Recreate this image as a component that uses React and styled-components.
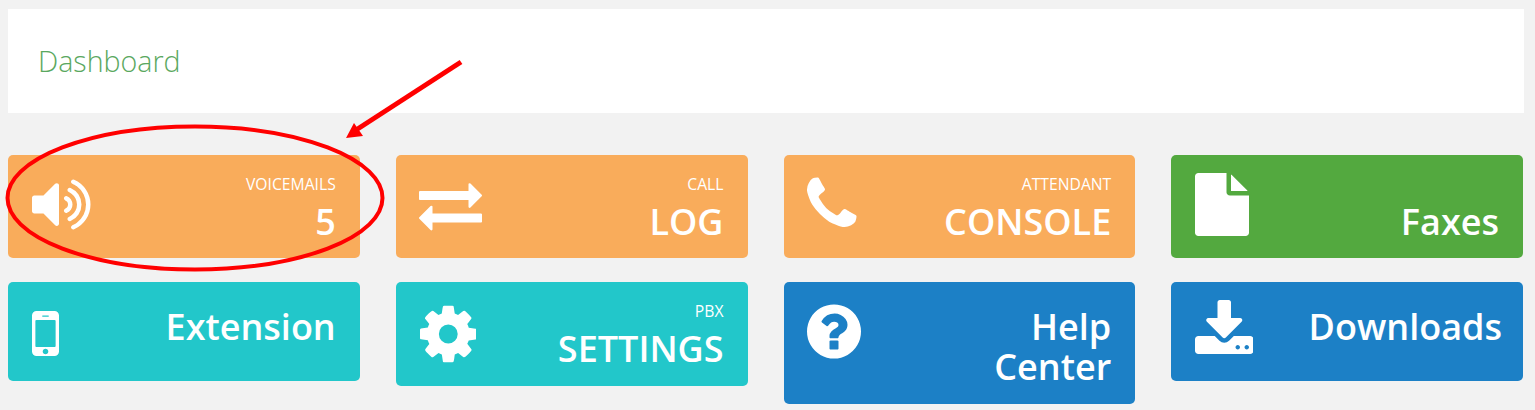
import styled, { createGlobalStyle } from 'styled-components';

const GlobalStyle = createGlobalStyle`
  body {
    margin: 0;
    background: #f2f2f2;
    font-family: 'Open Sans', 'Liberation Sans', sans-serif;
  }
`;

const colors = {
  orange: '#f9ac5b',
  green: '#53a93f',
  teal: '#22c7ca',
  blue: '#1c80c6',
};

// font awesome 4 glyphs, box is the horizontal extent of the glyph
const icons = {
  volume: {
    x: 64,
    w: 1664,
    d: 'M832 352v1088q0 26-19 45t-45 19-45-19l-333-333h-262q-26 0-45-19t-19-45v-384q0-26 19-45t45-19h262l333-333q19-19 45-19t45 19 19 45zm384 544q0 76-42.5 141.5t-112.5 93.5q-10 5-25 5-26 0-45-18.5t-19-45.5q0-21 12-35.5t29-25 34-23 29-36 12-56.5-12-56.5-29-36-34-23-29-25-12-35.5q0-27 19-45.5t45-18.5q15 0 25 5 70 27 112.5 93t42.5 142zm256 0q0 153-85 282.5t-225 188.5q-13 5-25 5-27 0-46-19t-19-45q0-39 39-59 56-29 76-44 74-54 115.5-135.5t41.5-173.5-41.5-173.5-115.5-135.5q-20-15-76-44-39-20-39-59 0-26 19-45t45-19q13 0 26 5 140 59 225 188.5t85 282.5zm256 0q0 230-127 422.5t-338 283.5q-13 5-26 5-26 0-45-19t-19-45q0-36 39-59 7-4 22.5-10.5t22.5-10.5q46-25 82-51 123-91 192-227t69-289-69-289-192-227q-36-26-82-51-7-4-22.5-10.5t-22.5-10.5q-39-23-39-59 0-26 19-45t45-19q13 0 26 5 211 91 338 283.5t127 422.5z',
  },
  exchange: {
    x: 0,
    w: 1792,
    d: 'M1792 1184v192q0 13-9.5 22.5t-22.5 9.5h-1376v192q0 13-9.5 22.5t-22.5 9.5q-12 0-24-10l-319-320q-9-9-9-22 0-14 9-23l320-320q9-9 23-9 13 0 22.5 9.5t9.5 22.5v192h1376q13 0 22.5 9.5t9.5 22.5zm0-544q0 14-9 23l-320 320q-9 9-23 9-13 0-22.5-9.5t-9.5-22.5v-192h-1376q-13 0-22.5-9.5t-9.5-22.5v-192q0-13 9.5-22.5t22.5-9.5h1376v-192q0-14 9-23t23-9q12 0 24 10l319 319q9 9 9 23z',
  },
  phone: {
    x: 192,
    w: 1408,
    d: 'M1600 1240q0 27-10 70.5t-21 68.5q-21 50-122 106-94 51-186 51-27 0-53-3.5t-57.5-12.5-47-14.5-55.5-20.5-49-18q-98-35-175-83-127-79-264-216t-216-264q-48-77-83-175-3-9-18-49t-20.5-55.5-14.5-47-12.5-57.5-3.5-53q0-92 51-186 56-101 106-122 25-11 68.5-21t70.5-10q14 0 21 3 18 6 53 76 11 19 30 54t35 63.5 31 53.5q3 4 17.5 25t21.5 35.5 7 28.5q0 20-28.5 50t-62 55-62 53-28.5 46q0 9 5 22.5t8.5 20.5 14 24 11.5 19q76 137 174 235t235 174q2 1 19 11.5t24 14 20.5 8.5 22.5 5q18 0 46-28.5t53-62 55-62 50-28.5q14 0 28.5 7t35.5 21.5 25 17.5q25 15 53.5 31t63.5 35 54 30q70 35 76 53 3 7 3 21z',
  },
  file: {
    x: 128,
    w: 1536,
    d: 'M1152 512v-472q22 14 36 28l408 408q14 14 28 36h-472zm-128 32q0 40 28 68t68 28h544v1056q0 40-28 68t-68 28h-1344q-40 0-68-28t-28-68v-1600q0-40 28-68t68-28h800v544z',
  },
  mobile: {
    x: 512,
    w: 768,
    d: 'M976 1408q0-33-23.5-56.5t-56.5-23.5-56.5 23.5-23.5 56.5 23.5 56.5 56.5 23.5 56.5-23.5 23.5-56.5zm208-160v-704q0-13-9.5-22.5t-22.5-9.5h-512q-13 0-22.5 9.5t-9.5 22.5v704q0 13 9.5 22.5t22.5 9.5h512q13 0 22.5-9.5t9.5-22.5zm-192-848q0-16-16-16h-160q-16 0-16 16t16 16h160q16 0 16-16zm288-16v1024q0 52-38 90t-90 38h-512q-52 0-90-38t-38-90v-1024q0-52 38-90t90-38h512q52 0 90 38t38 90z',
  },
  cog: {
    x: 128,
    w: 1536,
    size: 66,
    d: 'M1152 896q0-106-75-181t-181-75-181 75-75 181 75 181 181 75 181-75 75-181zm512-109v222q0 12-8 23t-20 13l-185 28q-19 54-39 91 35 50 107 138 10 12 10 25t-9 23q-27 37-99 108t-94 71q-12 0-26-9l-138-108q-44 23-91 38-16 136-29 186-7 28-36 28h-222q-14 0-24.5-8.5t-11.5-21.5l-28-184q-49-16-90-37l-141 107q-10 9-25 9-14 0-25-11-126-114-165-168-7-10-7-23 0-12 8-23 15-21 51-66.5t54-70.5q-27-50-41-99l-183-27q-13-2-21-12.5t-8-23.5v-222q0-12 8-23t19-13l186-28q14-46 39-92-40-57-107-138-10-12-10-24 0-10 9-23 26-36 98.5-107.5t94.5-71.5q13 0 26 10l138 107q44-23 91-38 16-136 29-186 7-28 36-28h222q14 0 24.5 8.5t11.5 21.5l28 184q49 16 90 37l142-107q9-9 24-9 13 0 25 10 129 119 165 170 7 8 7 22 0 12-8 23-15 21-51 66.5t-54 70.5q26 50 41 98l183 28q13 2 21 12.5t8 23.5z',
  },
  question: {
    x: 128,
    w: 1536,
    d: 'M1024 1376v-192q0-14-9-23t-23-9h-192q-14 0-23 9t-9 23v192q0 14 9 23t23 9h192q14 0 23-9t9-23zm256-672q0-88-55.5-163t-138.5-116-170-41q-243 0-371 213-15 24 8 42l132 100q7 6 19 6 16 0 25-12 53-68 86-92 34-24 86-24 48 0 85.5 26t37.5 59q0 38-20 61t-68 45q-63 28-115.5 86.5t-52.5 125.5v36q0 14 9 23t23 9h192q14 0 23-9t9-23q0-19 21.5-49.5t54.5-49.5q32-18 49-28.5t46-35 44.5-48 28-60.5 12.5-81zm384 192q0 209-103 385.5t-279.5 279.5-385.5 103-385.5-103-279.5-279.5-103-385.5 103-385.5 279.5-279.5 385.5-103 385.5 103 279.5 279.5 103 385.5z',
  },
  download: {
    x: 64,
    w: 1664,
    d: 'M1344 1344q0-26-19-45t-45-19-45 19-19 45 19 45 45 19 45-19 19-45zm256 0q0-26-19-45t-45-19-45 19-19 45 19 45 45 19 45-19 19-45zm128-224v320q0 40-28 68t-68 28h-1472q-40 0-68-28t-28-68v-320q0-40 28-68t68-28h465l135 136q58 56 136 56t136-56l136-136h464q40 0 68 28t28 68zm-325-569q17 41-14 70l-448 448q-18 19-45 19t-45-19l-448-448q-31-29-14-70 17-39 59-39h256v-448q0-26 19-45t45-19h256q26 0 45 19t19 45v448h256q42 0 59 39z',
  },
};

const cards = [
  { color: 'orange', icon: 'volume', label: 'VOICEMAILS', value: ['5'], height: 103, shift: 0.5 },
  { color: 'orange', icon: 'exchange', label: 'CALL', value: ['LOG'], height: 103 },
  { color: 'orange', icon: 'phone', label: 'ATTENDANT', value: ['CONSOLE'], height: 103 },
  { color: 'green', icon: 'file', label: '\u00a0', value: ['Faxes'], height: 103 },
  { color: 'teal', icon: 'mobile', value: ['Extension'], height: 99, lower: 2 },
  { color: 'teal', icon: 'cog', label: 'PBX', value: ['SETTINGS'], height: 104, lower: 1, shift: 0.5 },
  { color: 'blue', icon: 'question', value: ['Help', 'Center'], height: 122 },
  { color: 'blue', icon: 'download', value: ['Downloads'], height: 99, tight: true },
];

const ICON_SIZE = 63;

const Glyph = ({ name, lower = 0, shift = 0 }) => {
  const { x, w, d, size = ICON_SIZE } = icons[name];
  return (
    <GlyphSvg
      viewBox={`${x} 0 ${w} 1792`}
      width={(w / 1792) * size}
      height={size}
      $lower={lower}
      $shift={shift}
    >
      <path d={d} fill="#fff" />
    </GlyphSvg>
  );
};

const App = () => (
  <Page>
    <GlobalStyle />
    <Header>
      <Title>Dashboard</Title>
    </Header>
    <Grid>
      {cards.map(card => (
        <Card
          key={card.icon}
          $color={colors[card.color]}
          $height={card.height}
          $tight={card.tight}
        >
          <Glyph name={card.icon} lower={card.lower} shift={card.shift} />
          <Body>
            {card.label && <Label>{card.label}</Label>}
            <Value>
              {card.value.map(line => (
                <div key={line}>{line}</div>
              ))}
            </Value>
          </Body>
        </Card>
      ))}
    </Grid>
    <Markup viewBox="0 0 1535 410" width="1535" height="410">
      <ellipse cx="195" cy="198" rx="187.5" ry="71.5" fill="none" stroke="#f00" strokeWidth="4" />
      <line x1="461" y1="62" x2="356" y2="130" stroke="#f00" strokeWidth="5" />
      <polygon points="346,138 354,123 363,136" fill="#f00" />
    </Markup>
  </Page>
);

const Page = styled.div`
  position: relative;
  height: 410px;
  padding: 9px 11px 0 8px;
  box-sizing: border-box;
  overflow: hidden;
`;

const Header = styled.header`
  display: flex;
  align-items: center;
  box-sizing: border-box;
  height: 104px;
  padding: 0 0 2px 30px;
  background: #fff;
`;

const Title = styled.h1`
  margin: 0;
  color: #5aa860;
  font-size: 28.6px;
  font-weight: 300;
`;

const Grid = styled.div`
  display: grid;
  grid-template-columns: repeat(4, 1fr);
  column-gap: 36px;
  row-gap: 24px;
  align-items: start;
  margin: 42px 1px 0 0;
`;

const Card = styled.div`
  display: flex;
  justify-content: space-between;
  align-items: flex-start;
  box-sizing: border-box;
  height: ${props => props.$height}px;
  padding: 18px ${props => (props.$tight ? 21 : 24)}px 0 23.5px;
  border-radius: 5px;
  background: ${props => props.$color};
  color: #fff;
`;

const GlyphSvg = styled.svg`
  display: block;
  flex: none;
  margin: ${props => props.$lower}px 0 0 ${props => props.$shift}px;
`;

const Body = styled.div`
  padding-top: 1px;
  text-align: right;
`;

const Label = styled.div`
  font-size: 15.7px;
  line-height: 20px;
`;

const Value = styled.div`
  margin-top: 6px;
  font-size: 36px;
  font-weight: 600;
  line-height: 40px;

  ${Label} + & {
    margin-top: 8px;
  }
`;

const Markup = styled.svg`
  position: absolute;
  top: 0;
  left: 0;
  pointer-events: none;
`;

export default App;
